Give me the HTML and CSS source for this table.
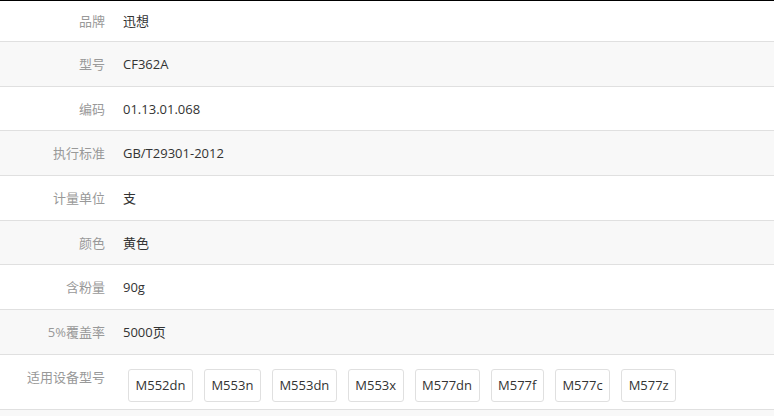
FILE: index.html
```html
<!DOCTYPE html>
<html lang="zh-CN">
<head>
<meta charset="utf-8">
<title>商品参数</title>
<link rel="stylesheet" href="styles.css">
</head>
<body>
<div class="specs">
  <div class="row first">
    <div class="label">品牌</div>
    <div class="value">迅想</div>
  </div>
  <div class="row alt">
    <div class="label">型号</div>
    <div class="value">CF362A</div>
  </div>
  <div class="row">
    <div class="label">编码</div>
    <div class="value">01.13.01.068</div>
  </div>
  <div class="row alt">
    <div class="label">执行标准</div>
    <div class="value">GB/T29301-2012</div>
  </div>
  <div class="row">
    <div class="label">计量单位</div>
    <div class="value">支</div>
  </div>
  <div class="row alt">
    <div class="label">颜色</div>
    <div class="value">黄色</div>
  </div>
  <div class="row">
    <div class="label">含粉量</div>
    <div class="value">90g</div>
  </div>
  <div class="row alt">
    <div class="label">5%覆盖率</div>
    <div class="value">5000页</div>
  </div>
  <div class="row tags-row">
    <div class="label">适用设备型号</div>
    <div class="value tags">
      <span class="tag">M552dn</span>
      <span class="tag">M553n</span>
      <span class="tag">M553dn</span>
      <span class="tag">M553x</span>
      <span class="tag">M577dn</span>
      <span class="tag">M577f</span>
      <span class="tag">M577c</span>
      <span class="tag">M577z</span>
    </div>
  </div>
  <div class="row alt tail"></div>
</div>
</body>
</html>
```
FILE: styles.css
```css
html, body {
  margin: 0;
  padding: 0;
  background: #fff;
}

body {
  font-family: "Open Sans", "Noto Sans CJK SC", sans-serif;
  font-size: 13px;
  color: #333;
}

.specs {
  border-top: 1px solid #000;
}

.row {
  display: flex;
  border-bottom: 1px solid #e0e0e0;
  line-height: 20px;
}

.row.alt {
  background: #f8f8f8;
}

.label {
  width: 105px;
  flex: none;
  text-align: right;
  color: #999;
  padding: 12px 0 11.67px;
}

.value {
  padding: 12px 0 11.67px 18px;
  color: #333;
}

.row.first .label,
.row.first .value {
  padding-top: 10px;
  padding-bottom: 10px;
}

.tags-row .label {
  padding-top: 12px;
}

.tags {
  display: flex;
  flex-wrap: wrap;
  gap: 11px;
  padding: 14px 0 7px 23px;
}

.tag {
  display: flex;
  align-items: center;
  height: 31px;
  padding: 0 6.5px;
  border: 1px solid #e0e0e0;
  border-radius: 3px;
  background: #fff;
  color: #333;
}

.tail {
  height: 8px;
  border-bottom: none;
}
```
